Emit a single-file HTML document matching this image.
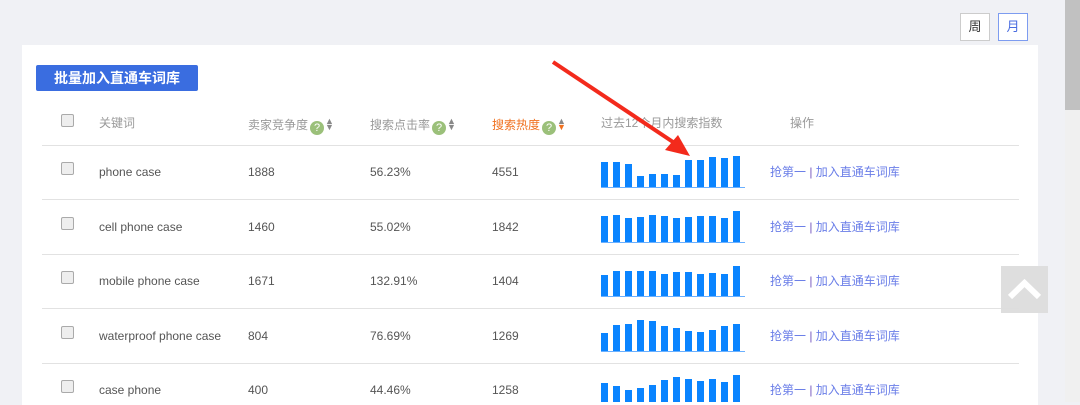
<!DOCTYPE html>
<html><head><meta charset="utf-8"><style>
body{margin:0;width:1080px;height:402px;overflow:hidden;background:#f0f1f5;font-family:"Liberation Sans","Noto Sans CJK SC",sans-serif;position:relative}
.abs{position:absolute}
.card{left:22px;top:45px;width:1016px;height:360px;background:#fff}
.tb{top:13px;width:28px;height:26px;border:1px solid #ccc;background:#fff;font-size:13px;text-align:center;line-height:26px;color:#333}
.btn{left:36px;top:65px;width:162px;height:26px;background:#3a6de0;border-radius:2px;color:#fff;font-weight:bold;font-size:14px;line-height:26px;text-align:center}
.h{top:114px;font-size:12px;color:#999}
.cb{width:11px;height:11px;border:1px solid #aaa;border-radius:2px;background:#eee}
.line{left:42px;width:977px;height:1px;background:#e2e2e2}
.t{font-size:12px;color:#555}
.op{font-size:12px;color:#6a7ee8}
.q{display:inline-block;width:14px;height:14px;border-radius:50%;background:#9bc07a;color:#fff;font-size:11px;line-height:14px;text-align:center;vertical-align:-2px;margin-left:2px}
.ar{display:inline-block;font-size:9px;vertical-align:-1px;color:#888;line-height:6px;width:8px;margin-left:1px}
</style></head><body>
<div class="abs" style="left:1065px;top:0;width:15px;height:402px;background:#f0f0f0"></div>
<div class="abs" style="left:1065px;top:0;width:15px;height:110px;background:#c1c1c1"></div>
<div class="abs card"></div>
<div class="abs tb" style="left:960px">周</div>
<div class="abs tb" style="left:998px;border-color:#7d9cf0;color:#4a6de0">月</div>
<div class="abs btn">批量加入直通车词库</div>
<div class="abs cb" style="left:61px;top:114px"></div>
<div class="abs h" style="left:99px">关键词</div>
<div class="abs h" style="left:248px;top:116px">卖家竞争度<span class="q">?</span><span class="ar">▲<br>▼</span></div>
<div class="abs h" style="left:370px;top:116px">搜索点击率<span class="q">?</span><span class="ar">▲<br>▼</span></div>
<div class="abs h" style="left:492px;top:116px;color:#f0701e">搜索热度<span class="q">?</span><span class="ar">▲<br><span style="color:#f0701e">▼</span></span></div>
<div class="abs h" style="left:601px">过去12个月内搜索指数</div>
<div class="abs h" style="left:790px">操作</div>
<div class="abs line" style="top:145px"></div>
<div class="abs line" style="top:199px"></div>
<div class="abs line" style="top:254px"></div>
<div class="abs line" style="top:308px"></div>
<div class="abs line" style="top:363px"></div>
<div id="rows"></div>
<svg class="abs" style="left:0;top:0" width="1080" height="402">
<g id="bars" fill="#0a84ff"></g>
<path d="M553 62 L676 144" stroke="#f32a1c" stroke-width="4"/>
<path d="M690 156 L665 150 L678 135 Z" fill="#f32a1c"/>
</svg>
<div class="abs" style="left:1001px;top:266px;width:47px;height:47px;background:#dcdcdc;opacity:.95"></div>
<svg class="abs" style="left:1001px;top:266px" width="47" height="47"><path d="M9 31 L23.5 17 L38 31" stroke="#fff" stroke-width="6" fill="none"/></svg>
<script>
var rows=[["phone case","1888","56.23%","4551",171,187,[162,162,164,176,174,174,175,160,160,157,158,156]],
["cell phone case","1460","55.02%","1842",226,242,[216,215,218,217,215,216,218,217,216,216,218,211]],
["mobile phone case","1671","132.91%","1404",280,296,[275,271,271,271,271,274,272,272,274,273,274,266]],
["waterproof phone case","804","76.69%","1269",335,351,[333,325,324,320,321,326,328,331,332,330,326,324]],
["case phone","400","44.46%","1258",389,406,[383,386,390,388,385,380,377,379,381,379,382,375]]];
var h="",b="";
rows.forEach(function(r){var y=r[4]-6;
h+='<div class="abs cb" style="left:61px;top:'+(r[4]-9)+'px"></div>';
h+='<div class="abs t" style="left:99px;top:'+y+'px">'+r[0]+'</div>';
h+='<div class="abs t" style="left:248px;top:'+y+'px">'+r[1]+'</div>';
h+='<div class="abs t" style="left:370px;top:'+y+'px">'+r[2]+'</div>';
h+='<div class="abs t" style="left:492px;top:'+y+'px">'+r[3]+'</div>';
h+='<div class="abs op" style="left:770px;top:'+(r[4]-8)+'px">抢第一 <span style="color:#7a5cc0">|</span> 加入直通车词库</div>';
r[6].forEach(function(t,i){b+='<rect x="'+(601+i*12)+'" y="'+t+'" width="7" height="'+(r[5]-t)+'"/>';});
b+='<rect x="601" y="'+r[5]+'" width="144" height="1" fill="#6ab0ff"/>';});
document.getElementById('rows').outerHTML=h;
document.getElementById('bars').innerHTML=b;
</script>
</body></html>
